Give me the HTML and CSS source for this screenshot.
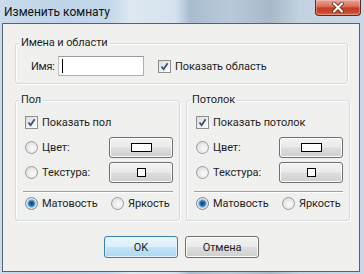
FILE: index.html
```html
<!DOCTYPE html>
<html>
<head>
<meta charset="utf-8">
<link rel="stylesheet" href="styles.css">
</head>
<body>
<div class="window">
  <div class="titlebar">
    <span class="title">Изменить комнату</span>
    <div class="close"><svg width="14" height="11" viewBox="0 0 14 11"><path d="M3 1.5 L11 9.5 M11 1.5 L3 9.5" stroke="#5a1a10" stroke-width="3.6" stroke-linecap="round"/><path d="M3 1.5 L11 9.5 M11 1.5 L3 9.5" stroke="#fff" stroke-width="2.2" stroke-linecap="round"/></svg></div>
  </div>
  <div class="client">
    <fieldset class="group group-top">
      <legend>Имена и области</legend>
      <div class="row names">
        <span class="lbl">Имя:</span>
        <div class="input"><span class="caret"></span></div>
        <span class="check"><svg width="9" height="9" viewBox="0 0 9 9"><path d="M1.5 4.5 L3.6 7.2 L7.6 1.2" stroke="#34507a" stroke-width="1.8" fill="none"/></svg></span>
        <span class="txt">Показать область</span>
      </div>
    </fieldset>
    <div class="cols">
      <fieldset class="group side left">
        <legend>Пол</legend>
        <div class="row opt"><span class="check"><svg width="9" height="9" viewBox="0 0 9 9"><path d="M1.5 4.5 L3.6 7.2 L7.6 1.2" stroke="#34507a" stroke-width="1.8" fill="none"/></svg></span><span class="txt">Показать пол</span></div>
        <div class="row opt"><span class="radio"></span><span class="txt grow">Цвет:</span><div class="btn small"><span class="rect"></span></div></div>
        <div class="row opt"><span class="radio"></span><span class="txt grow">Текстура:</span><div class="btn small"><span class="sq"></span></div></div>
        <div class="sep"></div>
        <div class="row last"><span class="radio on"></span><span class="txt w1">Матовость</span><span class="radio"></span><span class="txt">Яркость</span></div>
      </fieldset>
      <fieldset class="group side right">
        <legend>Потолок</legend>
        <div class="row opt"><span class="check"><svg width="9" height="9" viewBox="0 0 9 9"><path d="M1.5 4.5 L3.6 7.2 L7.6 1.2" stroke="#34507a" stroke-width="1.8" fill="none"/></svg></span><span class="txt">Показать потолок</span></div>
        <div class="row opt"><span class="radio"></span><span class="txt grow">Цвет:</span><div class="btn small"><span class="rect"></span></div></div>
        <div class="row opt"><span class="radio"></span><span class="txt grow">Текстура:</span><div class="btn small"><span class="sq"></span></div></div>
        <div class="sep"></div>
        <div class="row last"><span class="radio on"></span><span class="txt w1">Матовость</span><span class="radio"></span><span class="txt">Яркость</span></div>
      </fieldset>
    </div>
    <div class="actions">
      <div class="btn dlg default">OK</div>
      <div class="btn dlg">Отмена</div>
    </div>
  </div>
</div>
</body>
</html>
```

FILE: styles.css
```css
html, body {
  margin: 0;
  padding: 0;
}
* {
  box-sizing: border-box;
}
body {
  width: 364px;
  height: 274px;
  overflow: hidden;
  font-family: Roboto, "Noto Sans", sans-serif;
  font-size: 11px;
  letter-spacing: -0.1px;
  color: #1e1e1e;
  background:
    linear-gradient(90deg, #c9dbec 0px, #bfd4e9 60px, #c4d8ec 110px, #dde8f2 130px, #d6e2ee 175px, #a9bccf 190px, #b9c9d9 230px, #a8b8c8 270px, #c3d2e0 300px, #c8d8e8 364px);
}
.window {
  display: flex;
  flex-direction: column;
  height: 274px;
}
.titlebar {
  height: 23px;
  flex: none;
  display: flex;
  align-items: flex-start;
  justify-content: space-between;
  padding: 0 3px 0 4px;
}
.title {
  font-size: 12px;
  letter-spacing: 0;
  line-height: 15px;
  margin-top: 5px;
  color: #111;
}
.close {
  width: 46px;
  height: 16px;
  border: 1px solid #5e2a22;
  border-top: none;
  border-radius: 0 0 4px 4px;
  background: linear-gradient(#e8a494 0%, #d87560 40%, #c63d22 55%, #c9462a 80%, #d7704f 100%);
  display: flex;
  align-items: center;
  justify-content: center;
  box-shadow: inset 0 0 0 1px rgba(255,220,210,0.35);
}
.client {
  height: 249px;
  flex: none;
  margin: 0 4px 0 2px;
  border: 1px solid #58626e;
  background: #f0f0ee;
  padding: 12px 11px 0 12px;
  display: flex;
  flex-direction: column;
}
.group {
  margin: 0;
  border: 1px solid #d5dadf;
  border-radius: 3px;
  box-shadow: 1px 1px 0 #fff, inset 1px 1px 0 #fff;
  padding: 0 6px 0 9px;
  min-width: 0;
}
.group legend {
  padding: 0 2px;
  margin-left: -6px;
  line-height: 14px;
  color: #1e1e1e;
}
.group-top {
  padding-top: 5px;
  padding-bottom: 6px;
}
.row {
  display: flex;
  align-items: center;
  height: 21px;
}
.names {
  height: 22px;
}
.lbl {
  margin-left: 6px;
  width: 27px;
  white-space: nowrap;
  flex: none;
  letter-spacing: -0.3px;
}
.input {
  width: 86px;
  height: 20px;
  border: 1px solid #abadb3;
  border-top-color: #9a9a9a;
  border-left-color: #c4c6ca;
  background: #fff;
  display: flex;
  align-items: center;
  margin-right: 14px;
  flex: none;
}
.caret {
  width: 1px;
  height: 14px;
  background: #000;
  margin-left: 3px;
}
.check {
  width: 13px;
  height: 13px;
  border: 1px solid #8e8f8f;
  background: linear-gradient(135deg, #dcdcdc, #fefefe);
  display: inline-flex;
  align-items: center;
  justify-content: center;
  margin-right: 4px;
  flex: none;
}
.radio {
  width: 13px;
  height: 13px;
  border-radius: 50%;
  border: 1px solid #9c9c9c;
  background: radial-gradient(circle at 60% 60%, #fbfbfb 0, #e4e4e4 65%, #cccccc 100%);
  margin-right: 4px;
  flex: none;
}
.radio.on {
  border-color: #6b8aa6;
  background: radial-gradient(circle, #0f3d66 0, #2a72ad 2.5px, #86b8de 3.8px, #e6e6e6 4.6px);
}
.cols {
  display: flex;
  gap: 6px;
  margin-top: 9px;
}
.side {
  padding: 3px 6px 6px 9px;
}
.left {
  flex: 0 0 165px;
}
.right {
  flex: 0 0 164px;
}
.opt {
  height: 25px;
}
.grow {
  flex: 1;
}
.btn {
  border: 1px solid #707070;
  border-radius: 3px;
  background: linear-gradient(#f2f2f2 0%, #ebebeb 48%, #dddddd 52%, #cfcfcf 100%);
  box-shadow: inset 0 0 0 1px #fbfbfb;
  display: flex;
  align-items: center;
  justify-content: center;
  flex: none;
}
.small {
  width: 64px;
  height: 21px;
}
.rect {
  width: 21px;
  height: 9px;
  border: 1px solid #000;
  background: #fff;
}
.sq {
  width: 9px;
  height: 9px;
  border: 1px solid #000;
  background: #fff;
}
.sep {
  height: 2px;
  border-top: 1px solid #a0a0a0;
  border-bottom: 1px solid #fff;
  margin: 6px 0 0 -2px;
}
.last {
  height: 21px;
}
.w1 {
  width: 69px;
}
.actions {
  display: flex;
  justify-content: center;
  gap: 7px;
  margin-top: 15px;
}
.dlg {
  width: 74px;
  height: 22px;
}
.default {
  border-color: #3c7fb1;
  background: linear-gradient(#e8f5fc 0%, #dcf0fa 48%, #c3e4f6 52%, #a9daf4 100%);
  box-shadow: inset 0 0 0 1px #e0f3fd;
}
```
